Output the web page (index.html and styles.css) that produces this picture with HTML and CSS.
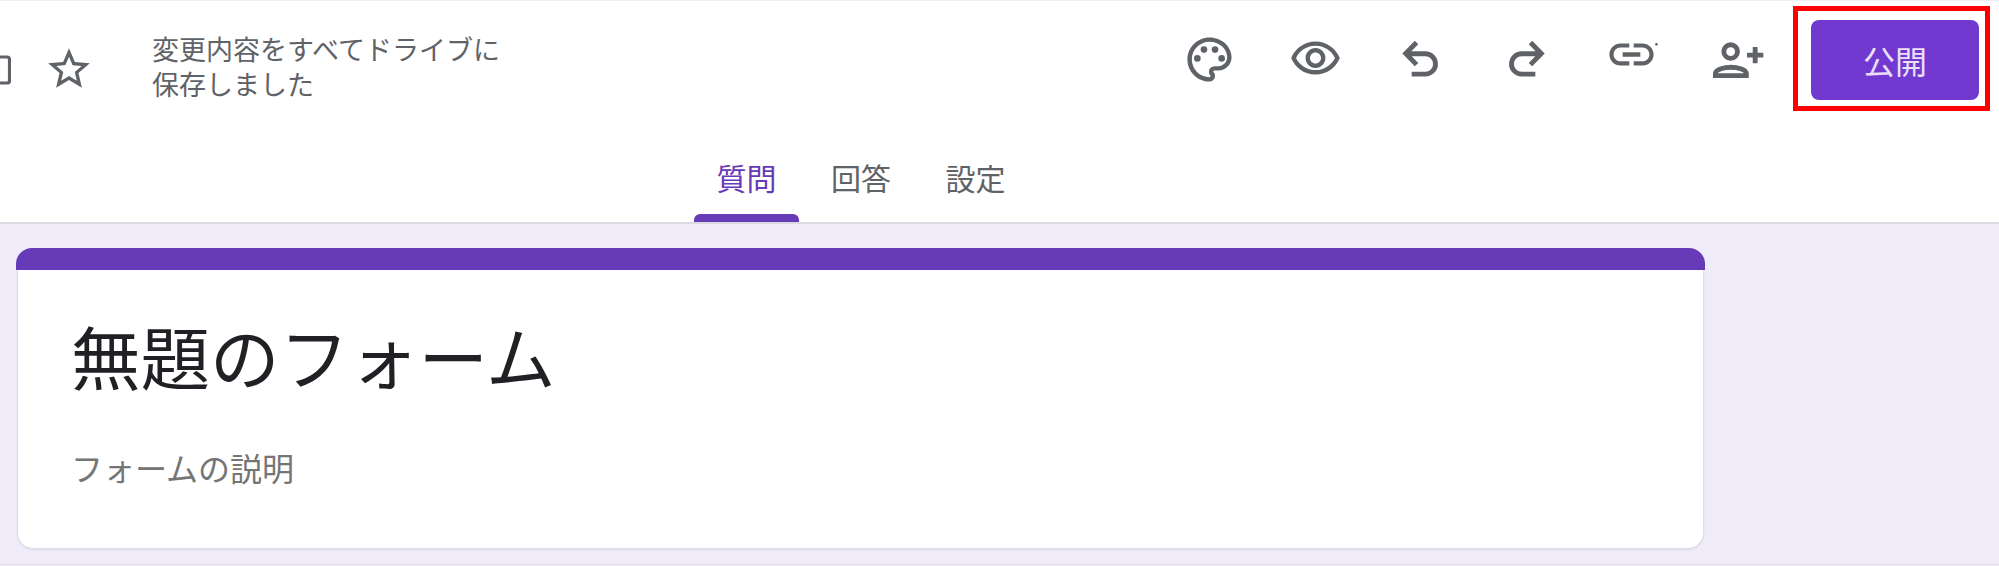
FILE: index.html
```html
<!DOCTYPE html>
<html lang="ja">
<head>
    <meta charset="UTF-8">
    <title>無題のフォーム</title>
    <link rel="stylesheet" href="styles.css">
</head>
<body>
    <header class="header">
        <div class="toolbar">
            <div class="doc-info">
                <svg class="folder-icon" viewBox="0 0 11 30"><path d="M-4 2h11a2.5 2.5 0 0 1 2.5 2.5v21a2.5 2.5 0 0 1-2.5 2.5H-4" fill="none" stroke="#5f6368" stroke-width="3.2"/></svg>
                <svg class="star-icon" viewBox="0 0 24 24"><path d="M22 9.24l-7.19-.62L12 2 9.19 8.63 2 9.24l5.46 4.73L5.82 21 12 17.27 18.18 21l-1.63-7.03L22 9.24zM12 15.4l-3.76 2.27 1-4.28-3.32-2.88 4.38-.38L12 6.1l1.71 4.04 4.38.38-3.32 2.88 1 4.28L12 15.4z"/></svg>
                <p class="save-status">変更内容をすべてドライブに<br>保存しました</p>
            </div>
            <div class="actions">
                <span class="icon-btn">
                    <svg viewBox="0 0 24 24"><path d="M12 22C6.49 22 2 17.51 2 12S6.49 2 12 2s10 4.04 10 9c0 3.31-2.69 6-6 6h-1.77c-.28 0-.5.22-.5.5 0 .12.05.23.13.33.41.47.64 1.06.64 1.67A2.5 2.5 0 0 1 12 22zm0-18c-4.41 0-8 3.59-8 8s3.59 8 8 8c.28 0 .5-.22.5-.5a.54.54 0 0 0-.14-.35c-.41-.46-.63-1.05-.63-1.65a2.5 2.5 0 0 1 2.5-2.5H16c2.21 0 4-1.79 4-4 0-3.86-3.59-7-8-7z"/><circle cx="6.5" cy="11.5" r="1.5"/><circle cx="9.5" cy="7.5" r="1.5"/><circle cx="14.5" cy="7.5" r="1.5"/><circle cx="17.5" cy="11.5" r="1.5"/></svg>
                </span>
                <span class="icon-btn">
                    <svg viewBox="0 0.2 24 24"><path d="M12 6c3.79 0 7.17 2.13 8.82 5.5C19.17 14.87 15.79 17 12 17s-7.17-2.13-8.82-5.5C4.83 8.13 8.21 6 12 6m0-2C7 4 2.73 7.11 1 11.5 2.73 15.89 7 19 12 19s9.27-3.11 11-7.5C21.27 7.11 17 4 12 4zm0 5c1.38 0 2.5 1.12 2.5 2.5S13.38 14 12 14s-2.5-1.12-2.5-2.5S10.62 9 12 9m0-2c-2.48 0-4.5 2.02-4.5 4.5S9.52 16 12 16s4.5-2.02 4.5-4.5S14.48 7 12 7z"/></svg>
                </span>
                <span class="icon-btn">
                    <svg viewBox="0 0.4 24 24"><path class="line" d="M8 19h6.2a4.6 4.6 0 0 0 0-9.200H5.500M10.200 4.700 5.300 9.700l4.900 5"/></svg>
                </span>
                <span class="icon-btn">
                    <svg viewBox="0 0.4 24 24"><path class="line" d="M16 19H9.800a4.600 4.600 0 0 1 0-9.200h8.700M13.800 4.700l4.900 5-4.900 5"/></svg>
                </span>
                <span class="icon-btn">
                    <svg viewBox="0 2.300 24 24"><path d="M3.900 12c0-1.710 1.390-3.100 3.100-3.100h4V7H7c-2.760 0-5 2.240-5 5s2.240 5 5 5h4v-1.900H7c-1.710 0-3.100-1.390-3.100-3.100zM8 13h8v-2H8v2zm9-6h-4v1.900h4c1.710 0 3.100 1.390 3.100 3.100s-1.390 3.100-3.100 3.100h-4V17h4c2.760 0 5-2.240 5-5s-2.240-5-5-5z"/><circle cx="23.300" cy="7.400" r=".6"/></svg>
                </span>
                <span class="icon-btn">
                    <svg viewBox="0 0 24 24"><circle class="line" cx="8.900" cy="8.400" r="3.100"/><path class="line" d="M2 19.300v-.8c0-2.200 4.400-3 7-3s7 .8 7 3v.8z"/><path class="line" d="M20 6.300v7.400M16.300 10h7.400"/></svg>
                </span>
            </div>
            <button class="publish-btn">公開</button>
            <div class="highlight"></div>
        </div>
        <nav class="tabs">
            <span class="tab active">質問</span>
            <span class="tab">回答</span>
            <span class="tab">設定</span>
        </nav>
    </header>
    <main class="content">
        <section class="form-card">
            <div class="card-accent"></div>
            <div class="card-body">
                <h1 class="form-title">無題のフォーム</h1>
                <p class="form-desc">フォームの説明</p>
            </div>
        </section>
    </main>
</body>
</html>
```

FILE: styles.css
```css
html, body {
    height: 100%;
}
body {
    font-family: "Noto Sans CJK JP", "Noto Sans", sans-serif;
    background-color: #f0ebf8;
    margin: 0;
    overflow: hidden;
    display: flex;
    flex-direction: column;
}
.header {
    background: white;
    border-top: 1px solid #f1f1f1;
    border-bottom: 2px solid #dcdae0;
}
.toolbar {
    position: relative;
    height: 117px;
    display: flex;
    align-items: center;
    padding-right: 20px;
}
.doc-info {
    display: flex;
    align-items: center;
    padding-top: 16px;
}
.folder-icon {
    width: 11px;
    height: 30px;
    margin-top: 5px;
}
.star-icon {
    width: 50px;
    height: 50px;
    fill: #5f6368;
    margin: 3px 0 0 33px;
}
.save-status {
    margin: 2px 0 0 58px;
    font-family: "Liberation Sans", "Noto Sans CJK JP", sans-serif;
    font-size: 27px;
    line-height: 35px;
    color: #5f6368;
}
.actions {
    margin-left: auto;
    display: flex;
    margin-right: 21px;
}
.icon-btn {
    width: 105.5px;
    display: flex;
    justify-content: center;
}
.icon-btn svg {
    width: 53px;
    height: 53px;
    fill: #5f6368;
}
.icon-btn .line {
    fill: none;
    stroke: #5f6368;
    stroke-width: 2.2;
}
.publish-btn {
    width: 168px;
    height: 80px;
    border: none;
    border-radius: 8px;
    background-color: #7239d0;
    color: #ebe0f9;
    font-family: inherit;
    font-size: 32px;
}
.highlight {
    position: absolute;
    top: 5px;
    right: 9px;
    width: 197px;
    height: 105px;
    box-sizing: border-box;
    border: 5px solid #f00;
}
.tabs {
    height: 104px;
    display: flex;
    gap: 9.5px;
    padding-left: 694px;
}
.tab {
    position: relative;
    padding: 39px 22.5px 0;
    font-size: 30px;
    line-height: 40px;
    color: #5f6368;
}
.tab.active {
    color: #673ab7;
}
.tab.active::after {
    content: "";
    position: absolute;
    left: 0;
    right: 0;
    bottom: 0;
    height: 8px;
    background-color: #673ab7;
    border-radius: 6px 6px 0 0;
}
.content {
    flex: 1;
    padding: 24px 0 0 16px;
    border-bottom: 1px solid #e0dde6;
    margin-bottom: 1px;
}
.form-card {
    width: 1689px;
}
.card-accent {
    height: 22px;
    background-color: #673ab7;
    border-radius: 16px 16px 0 0;
}
.card-body {
    height: 279px;
    margin: 0 1px;
    box-sizing: border-box;
    background: white;
    border: 1px solid #dfdde5;
    border-top: none;
    border-radius: 0 0 16px 16px;
    padding: 47px 0 0 53px;
    box-shadow: 0 1px 2px rgba(0,0,0,0.08);
}
.form-title {
    margin: 0;
    font-size: 69.5px;
    font-weight: 400;
    line-height: 76px;
    color: #202124;
}
.form-desc {
    margin: 56px 0 0 0;
    font-size: 32px;
    line-height: 36px;
    color: #757575;
}
```
